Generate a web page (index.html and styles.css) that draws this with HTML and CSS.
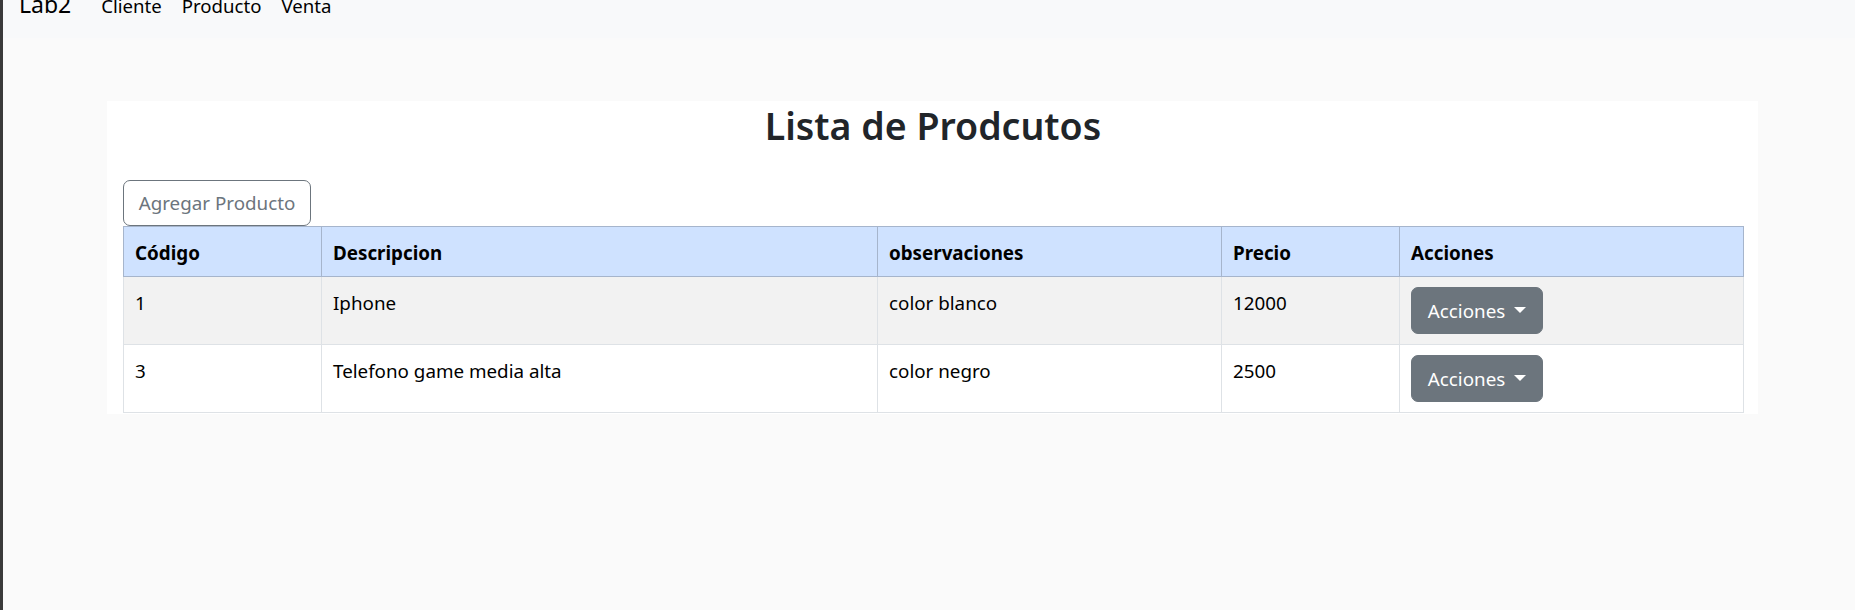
FILE: index.html
```html
<!DOCTYPE html>
<html lang="es">
<head>
<meta charset="utf-8">
<title>Lab2</title>
<link rel="stylesheet" href="styles.css">
</head>
<body>
<nav class="navbar">
  <span class="brand">Lab2</span>
  <a class="nav-link" href="#">Cliente</a>
  <a class="nav-link" href="#">Producto</a>
  <a class="nav-link" href="#">Venta</a>
</nav>
<main class="page">
  <section class="card">
    <h2 class="title">Lista de Prodcutos</h2>
    <div class="toolbar">
      <button class="btn btn-outline" type="button">Agregar Producto</button>
    </div>
    <table class="table">
      <thead>
        <tr>
          <th class="c-code">Código</th>
          <th class="c-desc">Descripcion</th>
          <th class="c-obs">observaciones</th>
          <th class="c-price">Precio</th>
          <th class="c-act">Acciones</th>
        </tr>
      </thead>
      <tbody>
        <tr class="striped">
          <td>1</td>
          <td>Iphone</td>
          <td>color blanco</td>
          <td>12000</td>
          <td class="act"><button class="btn btn-secondary" type="button">Acciones <span class="caret"></span></button></td>
        </tr>
        <tr>
          <td>3</td>
          <td>Telefono game media alta</td>
          <td>color negro</td>
          <td>2500</td>
          <td class="act"><button class="btn btn-secondary" type="button">Acciones <span class="caret"></span></button></td>
        </tr>
      </tbody>
    </table>
  </section>
</main>
</body>
</html>
```
FILE: styles.css
```css
* { box-sizing: border-box; }
html, body { margin: 0; padding: 0; }
body {
  background: #fafafa;
  border-left: 3px solid #3a3a3a;
  min-height: 610px;
  font-family: "Noto Sans", "Open Sans", sans-serif;
  color: #212529;
  overflow: hidden;
}
.navbar {
  display: flex;
  align-items: baseline;
  background: #f8f9fa;
  padding: 0 0 0 16px;
  margin-top: -10px;
  height: 48px;
}
.brand {
  font-size: 23px;
  line-height: 28px;
  margin-right: 30px;
  color: #000;
}
.nav-link {
  font-size: 18.6px;
  color: #000;
  text-decoration: none;
  margin-right: 20px;
}
.page {
  padding: 63px 0 0 104px;
}
.card {
  width: 1651px;
  background: #fff;
  padding: 0 15px 1px 16px;
}
.title {
  margin: 0;
  font-size: 37.5px;
  line-height: 50px;
  font-weight: 600;
  text-align: center;
  color: #212529;
}
.toolbar {
  padding-top: 29px;
}
.btn {
  font-family: inherit;
  font-size: 18.8px;
  line-height: 28px;
  border-radius: 7px;
  cursor: pointer;
}
.btn-outline {
  height: 46px;
  width: 188px;
  padding: 0;
  background: #fff;
  border: 1px solid #6c757d;
  color: #6c757d;
}
.btn-secondary {
  height: 47px;
  width: 132px;
  padding: 0;
  background: #6c757d;
  border: 1px solid #6c757d;
  color: #fff;
  display: inline-flex;
  align-items: center;
  justify-content: center;
  gap: 9px;
}
.caret {
  display: inline-block;
  width: 0;
  height: 0;
  border-left: 6px solid transparent;
  border-right: 6px solid transparent;
  border-top: 6px solid #fff;
  margin-top: -2px;
}
.table {
  width: 1620px;
  table-layout: fixed;
  border-collapse: collapse;
  font-size: 18.8px;
  line-height: 29px;
}
.table th, .table td {
  text-align: left;
  vertical-align: top;
  padding: 12px 11px 8px;
  border: 1px solid #dee2e6;
  color: #000;
}
.table thead th {
  background: #cfe2ff;
  border-color: #a6b5cc;
  font-weight: 700;
}
.c-code { width: 198px; }
.c-desc { width: 556px; }
.c-obs { width: 344px; }
.c-price { width: 178px; }
.c-act { width: 344px; }
.striped td { background: #f2f2f2; }
.table td.act { padding-top: 10px; padding-bottom: 10px; }
```
